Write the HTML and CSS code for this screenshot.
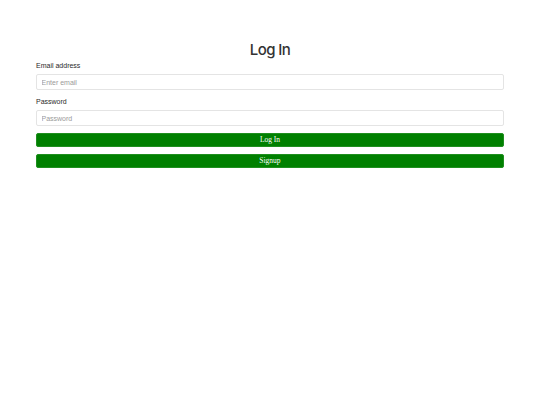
FILE: index.html
```
<!DOCTYPE html>
<html>
<head>
<meta charset="utf-8">
<link rel="stylesheet" href="styles.css">
</head>
<body>
<div class="container">
  <h1 class="title">Log In</h1>
  <form class="form">
    <div class="group">
      <label class="label">Email address</label>
      <input class="input" type="email" placeholder="Enter email">
    </div>
    <div class="group">
      <label class="label">Password</label>
      <input class="input" type="password" placeholder="Password">
    </div>
    <button class="btn" type="button">Log In</button>
    <button class="btn" type="button">Signup</button>
  </form>
</div>
</body>
</html>
```
FILE: styles.css
```
html, body {
  margin: 0;
  padding: 0;
  background: #fff;
}
body {
  font-family: "Liberation Sans", Arial, sans-serif;
  color: #222;
}
.container {
  padding: 41px 36px 0;
}
.title {
  margin: 0;
  font-family: Inter, "Open Sans", sans-serif;
  font-weight: 500;
  font-size: 15px;
  line-height: 18px;
  letter-spacing: -0.6px;
  text-align: center;
  color: #333;
}
.form {
  display: flex;
  flex-direction: column;
  margin-top: 2px;
}
.group {
  display: flex;
  flex-direction: column;
  margin-bottom: 7px;
}
.label {
  font-size: 7px;
  line-height: 10px;
  color: #2a2a2a;
}
.input {
  margin: 3px 0 0;
  box-sizing: border-box;
  height: 16px;
  width: 100%;
  border: 1px solid #e4e4e4;
  border-radius: 2px;
  padding: 0 4.5px;
  font-family: "Liberation Sans", Arial, sans-serif;
  font-size: 7px;
  color: #333;
  outline: none;
}
.input::placeholder {
  color: #9a9a9a;
}
.btn {
  box-sizing: border-box;
  height: 14px;
  width: 100%;
  margin: 0 0 7px;
  padding: 0;
  background: #008000;
  border: 1px solid #1f8f1f;
  border-radius: 2px;
  color: #fff;
  font-family: "Liberation Serif", "Times New Roman", serif;
  font-weight: 400;
  font-size: 7.5px;
  line-height: 12px;
}
```
